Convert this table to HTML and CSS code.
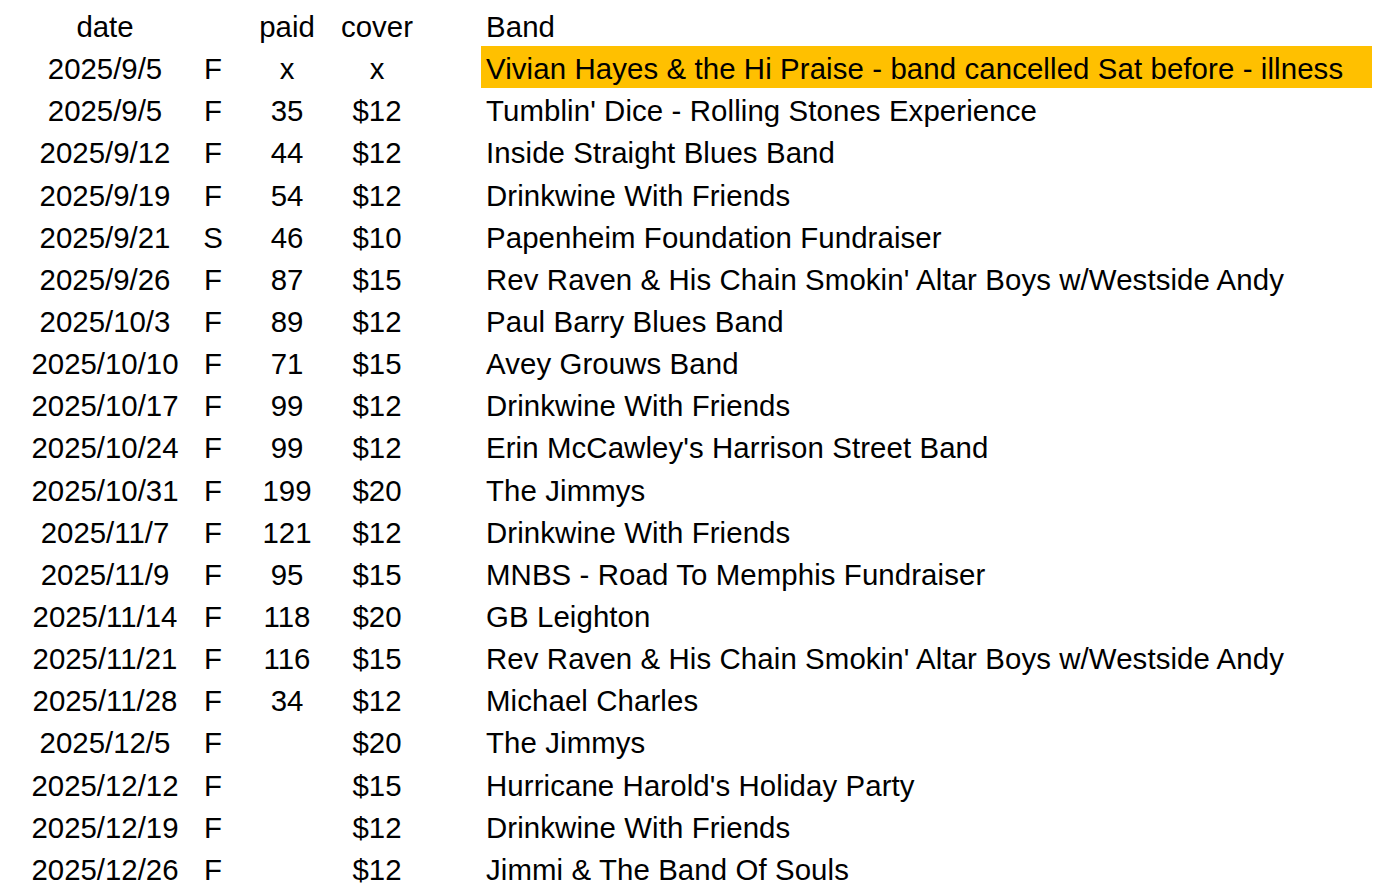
FILE: index.html
```html
<!DOCTYPE html>
<html>
<head>
<meta charset="utf-8">
<link rel="stylesheet" href="styles.css">
</head>
<body>
<div class="sheet">
  <div class="row head"><span class="c date">date</span><span class="c day"></span><span class="c paid">paid</span><span class="c cover">cover</span><span class="c band">Band</span></div>
  <div class="row"><span class="c date">2025/9/5</span><span class="c day">F</span><span class="c paid">x</span><span class="c cover">x</span><span class="c band hl">Vivian Hayes &amp; the Hi Praise - band cancelled Sat before - illness</span></div>
  <div class="row"><span class="c date">2025/9/5</span><span class="c day">F</span><span class="c paid">35</span><span class="c cover">$12</span><span class="c band">Tumblin' Dice - Rolling Stones Experience</span></div>
  <div class="row"><span class="c date">2025/9/12</span><span class="c day">F</span><span class="c paid">44</span><span class="c cover">$12</span><span class="c band">Inside Straight Blues Band</span></div>
  <div class="row"><span class="c date">2025/9/19</span><span class="c day">F</span><span class="c paid">54</span><span class="c cover">$12</span><span class="c band">Drinkwine With Friends</span></div>
  <div class="row"><span class="c date">2025/9/21</span><span class="c day">S</span><span class="c paid">46</span><span class="c cover">$10</span><span class="c band">Papenheim Foundation Fundraiser</span></div>
  <div class="row"><span class="c date">2025/9/26</span><span class="c day">F</span><span class="c paid">87</span><span class="c cover">$15</span><span class="c band">Rev Raven &amp; His Chain Smokin' Altar Boys w/Westside Andy</span></div>
  <div class="row"><span class="c date">2025/10/3</span><span class="c day">F</span><span class="c paid">89</span><span class="c cover">$12</span><span class="c band">Paul Barry Blues Band</span></div>
  <div class="row"><span class="c date">2025/10/10</span><span class="c day">F</span><span class="c paid">71</span><span class="c cover">$15</span><span class="c band">Avey Grouws Band</span></div>
  <div class="row"><span class="c date">2025/10/17</span><span class="c day">F</span><span class="c paid">99</span><span class="c cover">$12</span><span class="c band">Drinkwine With Friends</span></div>
  <div class="row"><span class="c date">2025/10/24</span><span class="c day">F</span><span class="c paid">99</span><span class="c cover">$12</span><span class="c band">Erin McCawley's Harrison Street Band</span></div>
  <div class="row"><span class="c date">2025/10/31</span><span class="c day">F</span><span class="c paid">199</span><span class="c cover">$20</span><span class="c band">The Jimmys</span></div>
  <div class="row"><span class="c date">2025/11/7</span><span class="c day">F</span><span class="c paid">121</span><span class="c cover">$12</span><span class="c band">Drinkwine With Friends</span></div>
  <div class="row"><span class="c date">2025/11/9</span><span class="c day">F</span><span class="c paid">95</span><span class="c cover">$15</span><span class="c band">MNBS - Road To Memphis Fundraiser</span></div>
  <div class="row"><span class="c date">2025/11/14</span><span class="c day">F</span><span class="c paid">118</span><span class="c cover">$20</span><span class="c band">GB Leighton</span></div>
  <div class="row"><span class="c date">2025/11/21</span><span class="c day">F</span><span class="c paid">116</span><span class="c cover">$15</span><span class="c band">Rev Raven &amp; His Chain Smokin' Altar Boys w/Westside Andy</span></div>
  <div class="row"><span class="c date">2025/11/28</span><span class="c day">F</span><span class="c paid">34</span><span class="c cover">$12</span><span class="c band">Michael Charles</span></div>
  <div class="row"><span class="c date">2025/12/5</span><span class="c day">F</span><span class="c paid"></span><span class="c cover">$20</span><span class="c band">The Jimmys</span></div>
  <div class="row"><span class="c date">2025/12/12</span><span class="c day">F</span><span class="c paid"></span><span class="c cover">$15</span><span class="c band">Hurricane Harold's Holiday Party</span></div>
  <div class="row"><span class="c date">2025/12/19</span><span class="c day">F</span><span class="c paid"></span><span class="c cover">$12</span><span class="c band">Drinkwine With Friends</span></div>
  <div class="row"><span class="c date">2025/12/26</span><span class="c day">F</span><span class="c paid"></span><span class="c cover">$12</span><span class="c band">Jimmi &amp; The Band Of Souls</span></div>
</div>
</body>
</html>
```

FILE: styles.css
```css
html, body {
  margin: 0;
  padding: 0;
  background: #ffffff;
  overflow: hidden;
}
body {
  font-family: "Liberation Sans", Arial, sans-serif;
  font-size: 29.4px;
  color: #000000;
}
.sheet {
  padding: 4px 0 0 20px;
}
.row {
  display: grid;
  grid-template-columns: 170px 46px 102px 78px 65px 891px;
  height: 42.15px;
  white-space: nowrap;
}
.c {
  box-sizing: border-box;
  height: 42.15px;
  padding-top: 4px;
  line-height: 38.15px;
  text-align: center;
}
.band {
  grid-column: 6;
  text-align: left;
  padding-left: 5px;
  letter-spacing: 0.1px;
}
.hl {
  background: #ffc000;
}
```
